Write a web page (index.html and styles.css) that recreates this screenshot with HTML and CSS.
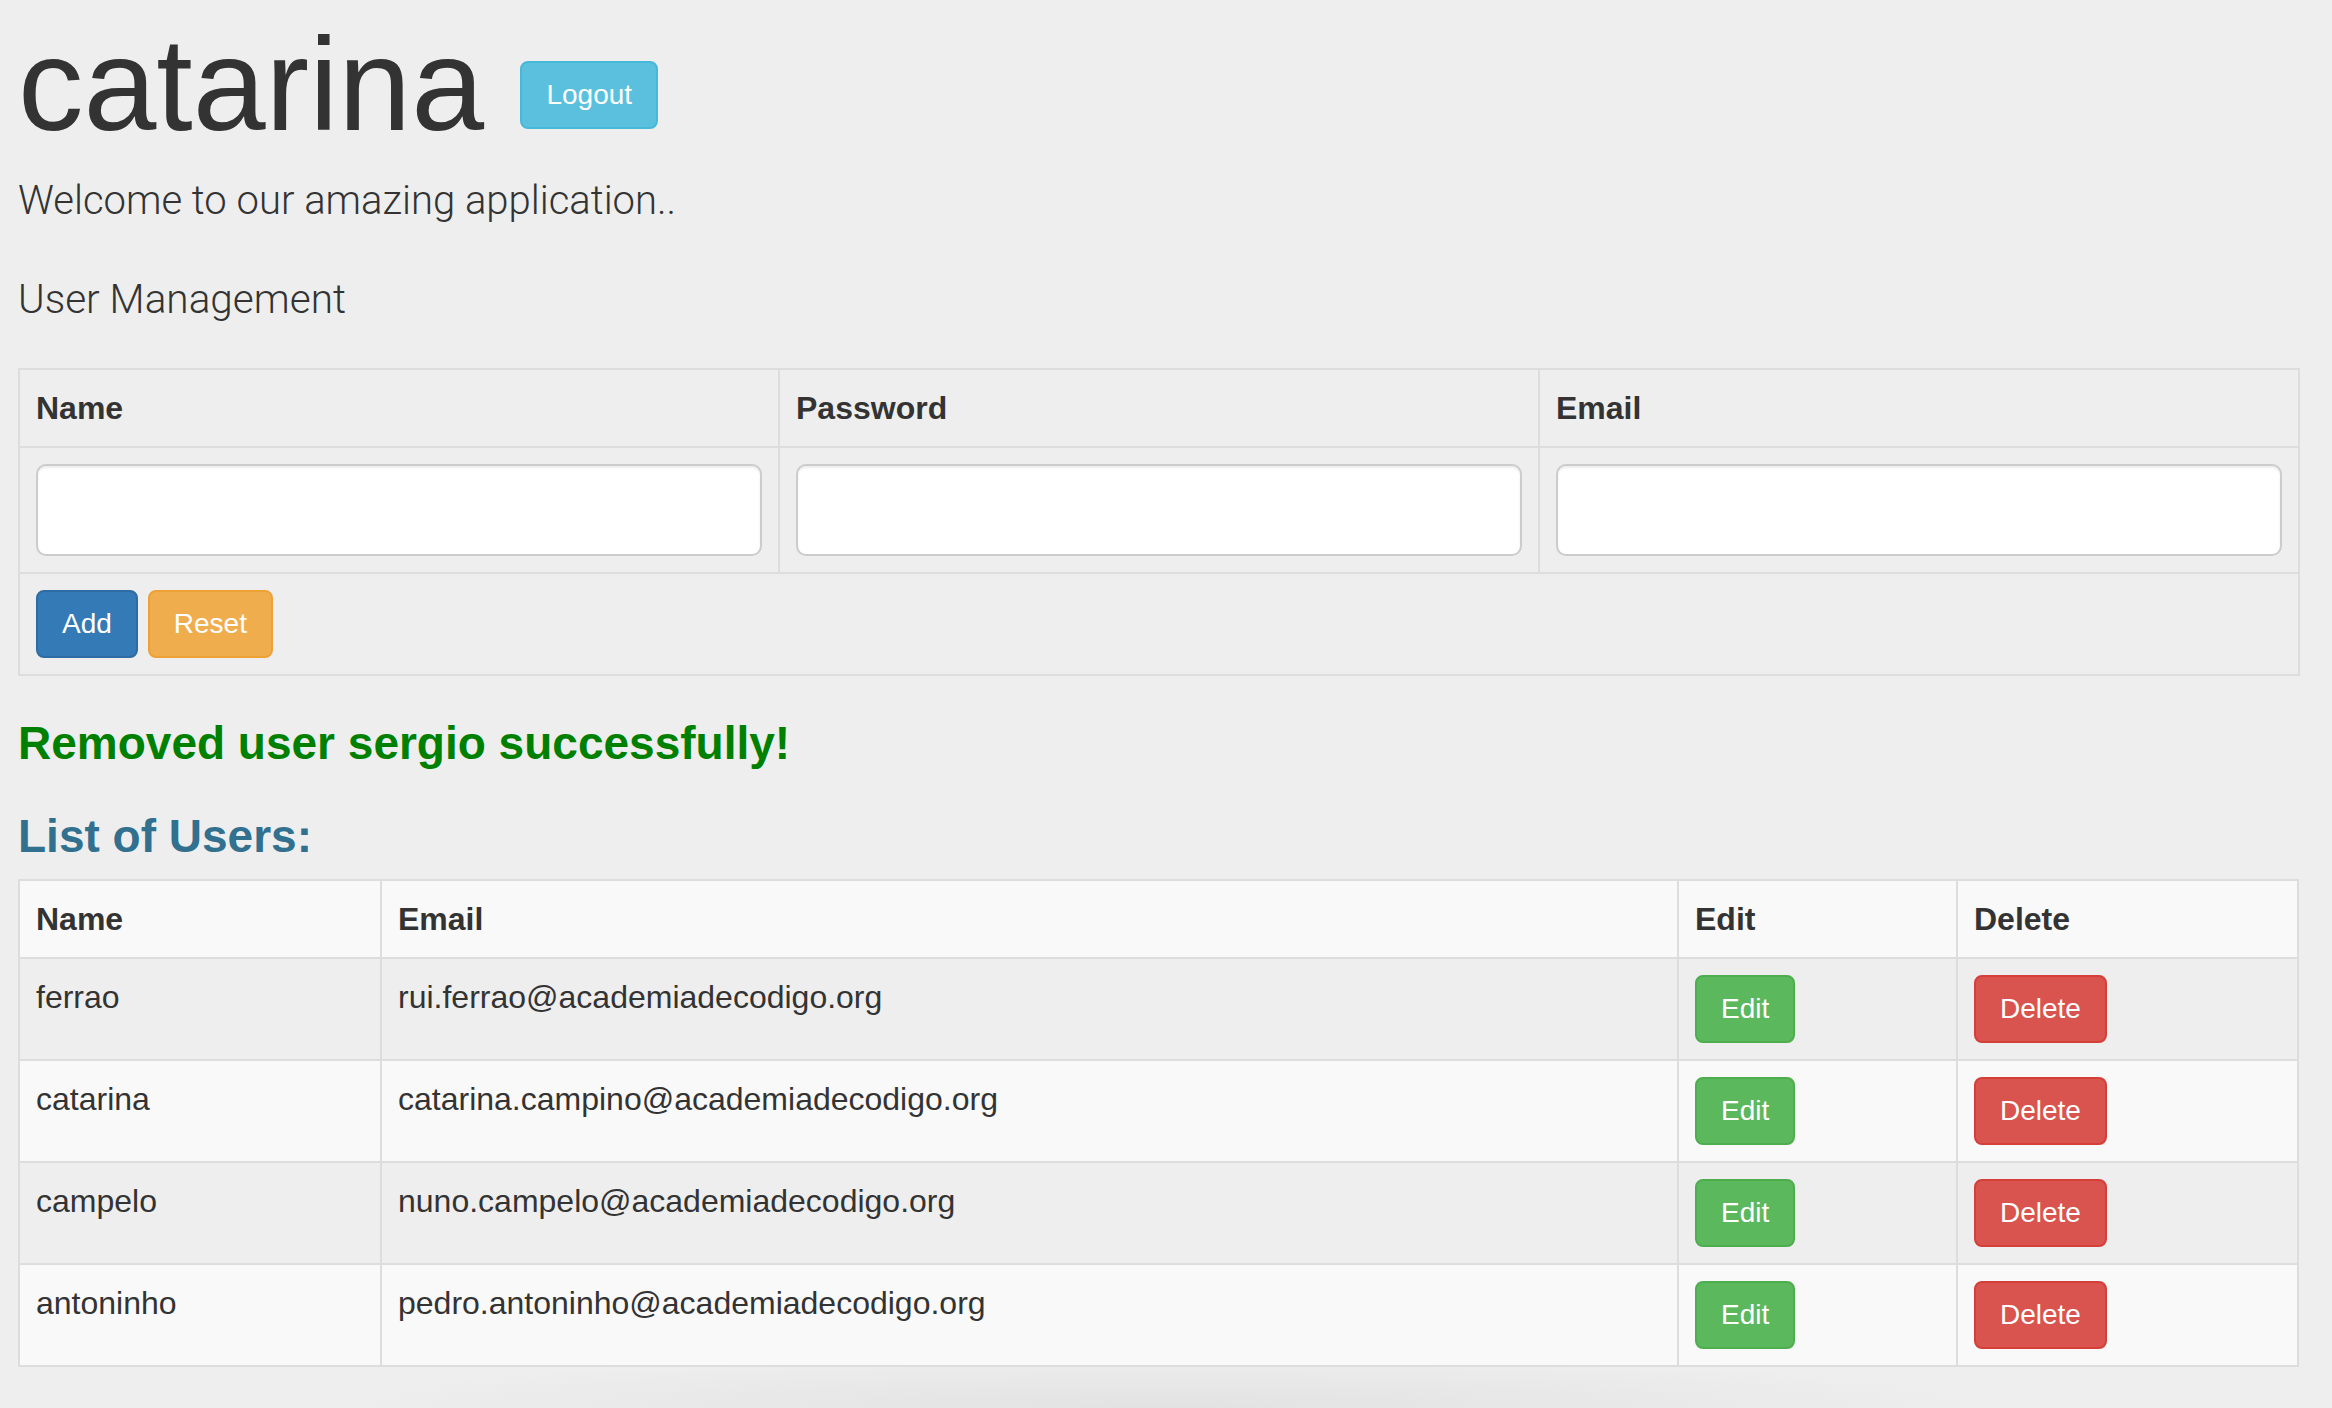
FILE: index.html
```html
<!DOCTYPE html>
<html lang="en">
<head>
<meta charset="utf-8">
<title>User Management</title>
<link rel="stylesheet" href="styles.css">
</head>
<body>
<main class="page">
  <h1 class="title">catarina <button class="btn btn-info" type="button">Logout</button></h1>
  <p class="lead">Welcome to our amazing application..</p>
  <p class="section">User Management</p>

  <table class="grid form-grid">
    <colgroup><col class="third"><col class="third"><col class="third"></colgroup>
    <thead>
      <tr><th>Name</th><th>Password</th><th>Email</th></tr>
    </thead>
    <tbody>
      <tr>
        <td><input class="field" type="text"></td>
        <td><input class="field" type="password"></td>
        <td><input class="field" type="email"></td>
      </tr>
      <tr>
        <td colspan="3" class="actions"><button class="btn btn-primary" type="button">Add</button><button class="btn btn-warning" type="button">Reset</button></td>
      </tr>
    </tbody>
  </table>

  <h3 class="message">Removed user sergio successfully!</h3>
  <h3 class="list-title">List of Users:</h3>

  <table class="grid users striped">
    <colgroup><col class="c-name"><col class="c-email"><col class="c-edit"><col class="c-delete"></colgroup>
    <thead>
      <tr><th>Name</th><th>Email</th><th>Edit</th><th>Delete</th></tr>
    </thead>
    <tbody>
      <tr><td>ferrao</td><td>rui.ferrao@academiadecodigo.org</td><td><button class="btn btn-success" type="button">Edit</button></td><td><button class="btn btn-danger" type="button">Delete</button></td></tr>
      <tr><td>catarina</td><td>catarina.campino@academiadecodigo.org</td><td><button class="btn btn-success" type="button">Edit</button></td><td><button class="btn btn-danger" type="button">Delete</button></td></tr>
      <tr><td>campelo</td><td>nuno.campelo@academiadecodigo.org</td><td><button class="btn btn-success" type="button">Edit</button></td><td><button class="btn btn-danger" type="button">Delete</button></td></tr>
      <tr><td>antoninho</td><td>pedro.antoninho@academiadecodigo.org</td><td><button class="btn btn-success" type="button">Edit</button></td><td><button class="btn btn-danger" type="button">Delete</button></td></tr>
    </tbody>
  </table>
</main>
</body>
</html>
```

FILE: styles.css
```css
html {
  height: 100%;
  background: #eeeeee radial-gradient(ellipse 860px 55px at 50% 100%, #e2e2e2 0%, rgba(238,238,238,0) 100%) no-repeat;
}

body {
  margin: 0;
  font-family: "Liberation Sans", Arial, Helvetica, sans-serif;
  color: #333333;
}

.page {
  display: flex;
  flex-direction: column;
  align-items: flex-start;
  padding: 0 18px;
}

.title {
  margin: 0;
  padding-top: 10px;
  font-size: 131px;
  line-height: 150px;
  font-weight: 400;
  white-space: nowrap;
}

.title .btn {
  vertical-align: middle;
}

.lead,
.section {
  margin: 13px 0 0;
  font-family: Roboto, "Liberation Sans", sans-serif;
  font-weight: 300;
  font-size: 40px;
  line-height: 56px;
}

.section {
  margin-top: 42px;
  font-size: 40.5px;
}

/* buttons */
.btn {
  display: inline-block;
  box-sizing: border-box;
  height: 68px;
  padding: 12px 24px;
  border: 2px solid transparent;
  border-radius: 8px;
  font-family: "Liberation Sans", Arial, sans-serif;
  font-size: 28px;
  line-height: 40px;
  color: #ffffff;
  cursor: pointer;
}

.btn-info { background: #5bc0de; border-color: #46b8da; }
.btn-primary { background: #337ab7; border-color: #2e6da4; }
.btn-warning { background: #f0ad4e; border-color: #eea236; }
.btn-success { background: #5cb85c; border-color: #4cae4c; }
.btn-danger { background: #d9534f; border-color: #d43f3a; }

/* tables */
.grid {
  margin-top: 41px;
  width: 2279px;
  border-collapse: collapse;
  table-layout: fixed;
}

.grid th,
.grid td {
  border: 2px solid #dddddd;
  padding: 16px;
  text-align: left;
  vertical-align: top;
  font-size: 32px;
  line-height: 44px;
}

.grid th {
  font-weight: 700;
}

.grid td .btn {
  vertical-align: top;
}

.third { width: 760px; }

.field {
  display: block;
  box-sizing: border-box;
  width: 100%;
  height: 92px;
  margin: 0;
  border: 2px solid #cccccc;
  border-radius: 10px;
  background: #ffffff;
  box-shadow: inset 0 2px 2px rgba(0, 0, 0, 0.075);
}

.actions .btn + .btn {
  margin-left: 10px;
}

.message,
.list-title {
  margin: 34px 0 0;
  font-size: 46px;
  line-height: 66px;
  font-weight: 700;
}

.message {
  color: #008000;
}

.list-title {
  margin-top: 27px;
  color: #31708f;
}

.users {
  margin-top: 10px;
  background: #f9f9f9;
}

.c-name { width: 362px; }
.c-email { width: 1297px; }
.c-edit { width: 279px; }
.c-delete { width: 341px; }

.striped tbody tr:nth-child(odd) {
  background: #eeeeee;
}
```
